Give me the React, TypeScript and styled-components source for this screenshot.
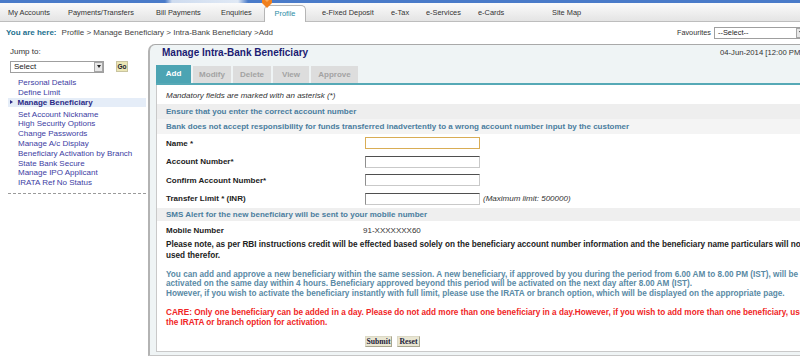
import React from "react";
import styled, { createGlobalStyle } from "styled-components";

const Global = createGlobalStyle`
  *, *::before, *::after { box-sizing: border-box; }
  html, body { margin: 0; padding: 0; background: #fff; overflow: hidden; }
  body { font-family: "Liberation Sans", Arial, sans-serif; color: #333; }
  #root { width: 800px; height: 359px; overflow: hidden; }
`;

const Page = styled.div`
  width: 800px;
  height: 359px;
  overflow: hidden;
  display: flex;
  flex-direction: column;
`;

const TopStrip = styled.div`
  flex: none;
  height: 3px;
  background: linear-gradient(
    to right,
    #4a7bc9 0,
    #4a7bc9 165px,
    #cfdcef 172px,
    #e0e9f5 238px,
    #4a7bc9 248px,
    #4a7bc9 100%
  );
`;

const NavBar = styled.nav`
  flex: none;
  height: 19px;
  display: flex;
  align-items: flex-end;
  padding-left: 8px;
  background: linear-gradient(#fbfbfb, #e4e4e4);
  border-bottom: 1px solid #bdbdbd;
  font-size: 7.4px;
`;

const NavItem = styled.div<{ $w: number }>`
  flex: none;
  width: ${(p) => p.$w}px;
  height: 16px;
  line-height: 16px;
  color: #333;
  white-space: nowrap;
`;

const ProfileTab = styled.div`
  position: relative;
  flex: none;
  width: 42px;
  height: 17px;
  margin-bottom: -1px;
  margin-right: 16px;
  border: 1px solid #b5b5b5;
  border-bottom: none;
  border-radius: 5px 5px 0 0;
  background: #fff;
  color: #2a8da6;
  text-align: center;
  line-height: 16px;
`;

const Marker = styled.svg`
  position: absolute;
  top: -6px;
  left: -3px;
`;

const Crumbs = styled.div`
  flex: none;
  height: 22px;
  padding: 0 0 1px 6px;
  display: flex;
  align-items: center;
  font-size: 8px;
  white-space: nowrap;
`;

const Here = styled.span`
  font-weight: bold;
  color: #236f8e;
`;

const CrumbPath = styled.span`
  margin-left: 5px;
  color: #444;
`;

const FavLabel = styled.span`
  margin-left: auto;
  margin-right: 3px;
  font-size: 7.3px;
  color: #333;
`;

const DropBox = styled.div<{ $w: number }>`
  flex: none;
  width: ${(p) => p.$w}px;
  height: 12px;
  border: 1px solid #9f9f9f;
  background: #fff;
  display: flex;
  align-items: center;
  justify-content: space-between;
  padding-left: 3px;
  color: #222;
`;

const FavDrop = styled(DropBox)`
  margin-right: -6px;
  font-size: 7.4px;
`;

const ArrowBox = styled.span`
  width: 9px;
  height: 10px;
  background: #e7e7e7;
  border: 1px solid #a6a6a6;
  display: flex;
  align-items: center;
  justify-content: center;
  &::after {
    content: "";
    border-top: 3px solid #222;
    border-left: 2.5px solid transparent;
    border-right: 2.5px solid transparent;
  }
`;

const Main = styled.div`
  flex: 1;
  display: flex;
  min-height: 0;
`;

const Sidebar = styled.aside`
  flex: none;
  width: 148px;
  padding-top: 2px;
  font-size: 8px;
`;

const Jump = styled.div`
  padding-left: 10px;
  line-height: 11px;
  color: #333;
`;

const SelRow = styled.div`
  display: flex;
  align-items: center;
  margin-top: 3.5px;
  padding-left: 10px;
`;

const SideDrop = styled(DropBox)`
  font-size: 8px;
`;

const GoBtn = styled.span`
  margin-left: 12px;
  width: 12px;
  height: 11px;
  background: #ebe6b4;
  border: 1px solid #c9c4a0;
  font-size: 6.5px;
  font-weight: bold;
  color: #1c1c2c;
  display: flex;
  align-items: center;
  justify-content: center;
`;

const Links = styled.ul`
  list-style: none;
  margin: 5.5px 0 0 0;
  padding: 0 0 0 18px;
`;

const LinkItem = styled.li`
  height: 9.8px;
  line-height: 9.8px;
  color: #3d3da3;
  white-space: nowrap;
`;

const ActiveItem = styled.li`
  margin: 0 0 2.2px -10px;
  padding-left: 2px;
  width: 138px;
  height: 9.8px;
  background: #e5edf8;
  display: flex;
  align-items: center;
  font-weight: bold;
  color: #2b2b86;
  white-space: nowrap;
`;

const Bullet = styled.span`
  width: 0;
  height: 0;
  border-left: 3.5px solid #2b2b86;
  border-top: 2.5px solid transparent;
  border-bottom: 2.5px solid transparent;
  margin-right: 4.5px;
`;

const Dashed = styled.div`
  margin: 5px 0 0 8px;
  width: 138px;
  border-top: 1px dashed #9a9a9a;
`;

const Panel = styled.section`
  flex: none;
  width: 700px;
  height: 312px;
  border-top: 1px solid #a9a9a9;
  border-left: 2px solid #b3b3b3;
  border-bottom: 1px solid #c6c6c6;
  border-top-left-radius: 7px;
  background: #eff4f5;
`;

const TitleRow = styled.div`
  height: 20px;
  display: grid;
  grid-template-columns: 558px auto;
  padding-left: 12px;
  white-space: nowrap;
`;

const Title = styled.h1`
  margin: 0;
  padding-top: 2px;
  font-size: 10px;
  line-height: 12px;
  font-weight: bold;
  color: #1b1b72;
`;

const DateText = styled.span`
  padding-top: 2px;
  font-size: 7.7px;
  line-height: 12px;
  color: #333;
`;

const TabsRow = styled.div`
  margin-left: 6px;
  height: 20px;
  border-bottom: 2px solid #56a9b6;
  display: flex;
  align-items: flex-end;
  gap: 2px;
`;

const Tab = styled.div<{ $active?: boolean; $w: number }>`
  flex: none;
  width: ${(p) => p.$w}px;
  height: ${(p) => (p.$active ? 18 : 17)}px;
  line-height: ${(p) => (p.$active ? 18 : 17)}px;
  text-align: center;
  font-size: 8px;
  font-weight: bold;
  background: ${(p) => (p.$active ? "#4ca4b3" : "#dddddd")};
  color: ${(p) => (p.$active ? "#ffffff" : "#a3a3a3")};
`;

const ContentBox = styled.div`
  margin-left: 6px;
  height: 267px;
  background: #fff;
  border: 1px solid #c9c9c9;
  border-top: none;
  font-size: 8px;
  white-space: nowrap;
`;

const Note = styled.div`
  height: 19px;
  padding: 5px 0 0 9px;
  line-height: 12px;
  font-style: italic;
  color: #333;
`;

const Strip = styled.div<{ $bg: string; $h: number }>`
  height: ${(p) => p.$h}px;
  line-height: ${(p) => p.$h}px;
  padding-left: 9px;
  background: ${(p) => p.$bg};
  color: #4a7d9e;
  font-weight: bold;
`;

const Field = styled.div<{ $h: number }>`
  height: ${(p) => p.$h}px;
  display: grid;
  grid-template-columns: 199px auto auto;
  justify-content: start;
  align-items: center;
  padding-left: 9px;
`;

const Label = styled.span`
  font-weight: bold;
  color: #222;
`;

const TextInput = styled.input<{ $focus?: boolean }>`
  width: 115px;
  height: 12px;
  margin: 0;
  padding: 0 2px;
  font: 8px "Liberation Sans", Arial, sans-serif;
  background: #fff;
  outline: none;
  border: 1px solid ${(p) => (p.$focus ? "#d9ad55" : "#c9c9c9")};
  border-top-color: ${(p) => (p.$focus ? "#d9ad55" : "#4f4f4f")};
  border-left-color: ${(p) => (p.$focus ? "#d9ad55" : "#8f8f8f")};
`;

const Hint = styled.span`
  margin-left: 3px;
  font-style: italic;
  color: #333;
`;

const Value = styled.span`
  margin-left: -2px;
  color: #333;
`;

const Para = styled.p<{ $color: string; $lh: number; $mt: number }>`
  margin: ${(p) => p.$mt}px 0 0 0;
  padding-left: 9px;
  font-size: 8.2px;
  font-weight: bold;
  color: ${(p) => p.$color};
  line-height: ${(p) => p.$lh}px;
`;

const ButtonRow = styled.div`
  display: flex;
  gap: 5px;
  margin-top: 7.7px;
  padding-left: 208px;
`;

const Btn = styled.button<{ $w: number }>`
  width: ${(p) => p.$w}px;
  height: 11px;
  padding: 0;
  margin: 0;
  background: #e9e6d2;
  border: 1px solid;
  border-color: #dcd9c6 #a9a690 #a9a690 #dcd9c6;
  font-family: "Liberation Serif", "Times New Roman", serif;
  font-weight: bold;
  font-size: 7.7px;
  line-height: 9px;
  color: #1c1c3c;
`;

const navItems: [string, number][] = [
  ["My Accounts", 60],
  ["Payments/Transfers", 88],
  ["Bill Payments", 65],
  ["Enquiries", 43],
];
const navItems2: [string, number][] = [
  ["e-Fixed Deposit", 69],
  ["e-Tax", 35],
  ["e-Services", 52],
  ["e-Cards", 74],
  ["Site Map", 60],
];

const sideLinksA = ["Personal Details", "Define Limit"];
const sideLinksB = [
  "Set Account Nickname",
  "High Security Options",
  "Change Passwords",
  "Manage A/c Display",
  "Beneficiary Activation by Branch",
  "State Bank Secure",
  "Manage IPO Applicant",
  "IRATA Ref No Status",
];

export default function App() {
  return (
    <Page>
      <Global />
      <TopStrip />
      <NavBar>
        {navItems.map(([t, w]) => (
          <NavItem key={t} $w={w}>
            {t}
          </NavItem>
        ))}
        <ProfileTab>
          <Marker width="10" height="8" viewBox="0 0 10 8">
            <polygon points="0,0 10,0 10,3 5,8 0,3" fill="#f0801e" />
            <polygon points="3,0 7,0 5,2" fill="#f7a85a" />
          </Marker>
          Profile
        </ProfileTab>
        {navItems2.map(([t, w]) => (
          <NavItem key={t} $w={w}>
            {t}
          </NavItem>
        ))}
      </NavBar>
      <Crumbs>
        <Here>You are here:</Here>
        <CrumbPath>Profile &gt; Manage Beneficiary &gt; Intra-Bank Beneficiary &gt;Add</CrumbPath>
        <FavLabel>Favourites</FavLabel>
        <FavDrop $w={92}>
          --Select--
          <ArrowBox />
        </FavDrop>
      </Crumbs>
      <Main>
        <Sidebar>
          <Jump>Jump to:</Jump>
          <SelRow>
            <SideDrop $w={94}>
              Select
              <ArrowBox />
            </SideDrop>
            <GoBtn>Go</GoBtn>
          </SelRow>
          <Links>
            {sideLinksA.map((t) => (
              <LinkItem key={t}>{t}</LinkItem>
            ))}
            <ActiveItem>
              <Bullet />
              Manage Beneficiary
            </ActiveItem>
            {sideLinksB.map((t) => (
              <LinkItem key={t}>{t}</LinkItem>
            ))}
          </Links>
          <Dashed />
        </Sidebar>
        <Panel>
          <TitleRow>
            <Title>Manage Intra-Bank Beneficiary</Title>
            <DateText>04-Jun-2014 [12:00 PM]</DateText>
          </TitleRow>
          <TabsRow>
            <Tab $active $w={35}>Add</Tab>
            <Tab $w={38}>Modify</Tab>
            <Tab $w={38}>Delete</Tab>
            <Tab $w={36}>View</Tab>
            <Tab $w={47}>Approve</Tab>
          </TabsRow>
          <ContentBox>
            <Note>Mandatory fields are marked with an asterisk (*)</Note>
            <Strip $bg="#eeeeee" $h={15}>Ensure that you enter the correct account number</Strip>
            <Strip $bg="#f4f4f4" $h={15}>
              Bank does not accept responsibility for funds transferred inadvertently to a wrong account number input by the customer
            </Strip>
            <Field $h={18}>
              <Label>Name *</Label>
              <TextInput $focus readOnly />
            </Field>
            <Field $h={19}>
              <Label>Account Number*</Label>
              <TextInput readOnly />
            </Field>
            <Field $h={18}>
              <Label>Confirm Account Number*</Label>
              <TextInput readOnly />
            </Field>
            <Field $h={19}>
              <Label>Transfer Limit * (INR)</Label>
              <TextInput readOnly />
              <Hint>(Maximum limit: 500000)</Hint>
            </Field>
            <Strip $bg="#efefef" $h={13}>SMS Alert for the new beneficiary will be sent to your mobile number</Strip>
            <Field $h={19}>
              <Label>Mobile Number</Label>
              <Value>91-XXXXXXX60</Value>
            </Field>
            <Para $color="#222" $lh={10.5} $mt={0}>
              Please note, as per RBI instructions credit will be effected based solely on the beneficiary account number information and the beneficiary name particulars will not be
              <br />
              used therefor.
            </Para>
            <Para $color="#5a8aa5" $lh={9.6} $mt={8.5}>
              You can add and approve a new beneficiary within the same session. A new beneficiary, if approved by you during the period from 6.00 AM to 8.00 PM (IST), will be
              <br />
              activated on the same day within 4 hours. Beneficiary approved beyond this period will be activated on the next day after 8.00 AM (IST).
              <br />
              However, if you wish to activate the beneficiary instantly with full limit, please use the IRATA or branch option, which will be displayed on the appropriate page.
            </Para>
            <Para $color="#f02525" $lh={10} $mt={10}>
              CARE: Only one beneficiary can be added in a day. Please do not add more than one beneficiary in a day.However, if you wish to add more than one beneficiary, use
              <br />
              the IRATA or branch option for activation.
            </Para>
            <ButtonRow>
              <Btn $w={27}>Submit</Btn>
              <Btn $w={23}>Reset</Btn>
            </ButtonRow>
          </ContentBox>
        </Panel>
      </Main>
    </Page>
  );
}
